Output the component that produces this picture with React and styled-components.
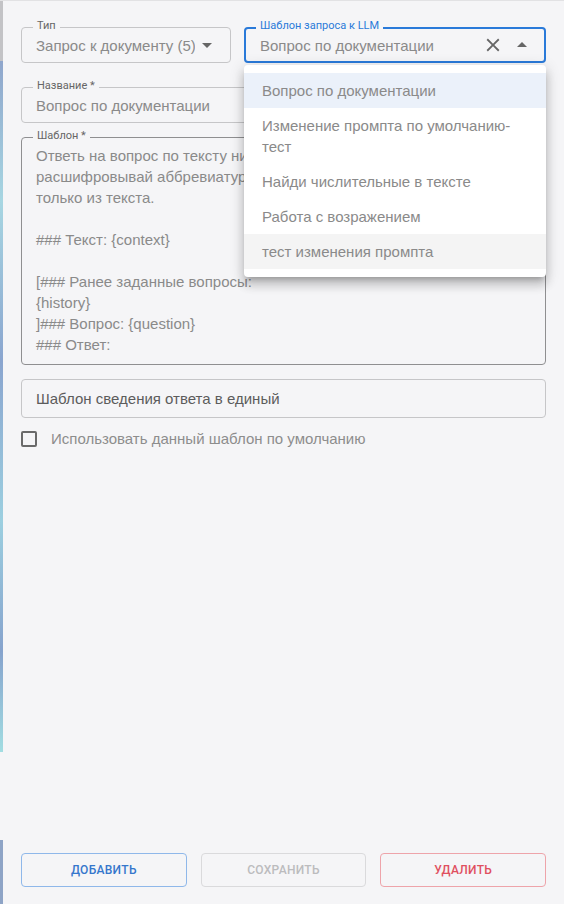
import React from "react";
import styled, { createGlobalStyle } from "styled-components";

const PAGE_BG = "#f5f5f7";

const GlobalStyle = createGlobalStyle`
  html, body {
    margin: 0;
    padding: 0;
    background: ${PAGE_BG};
  }
  * {
    box-sizing: border-box;
  }
`;

const Page = styled.div`
  display: flex;
  height: 904px;
  border-top: 1px solid #e2e2e4;
  background: ${PAGE_BG};
  font-family: "Liberation Sans", Arial, sans-serif;
`;

const Strip = styled.div`
  width: 3px;
  flex-shrink: 0;
  background:
    linear-gradient(to bottom,
      #c3c3c6 0, #c3c3c6 60px,
      #8fa6cc 60px, #a7d6e2 200px, #8aa5cf 360px, #9ccfe0 520px, #86a3cd 650px, #a2dde2 751px,
      transparent 751px, transparent 839px,
      #8ea4c6 839px, #8ea4c6 100%);
`;

const Panel = styled.div`
  flex: 1;
  display: flex;
  flex-direction: column;
  padding: 26px 18px 17px 18px;
`;

const Form = styled.div`
  display: flex;
  flex-direction: column;
  gap: 14px;
`;

const TopRow = styled.div`
  display: grid;
  grid-template-columns: 210px 1fr;
  gap: 13px;
  margin-bottom: 10px;
`;

const FieldBox = styled.div`
  position: relative;
  display: flex;
  align-items: center;
  height: ${p => p.$height || 36}px;
  padding: 0 ${p => (p.$focused ? 10 : 11)}px 0 14px;
  border: ${p => (p.$focused ? "2px solid #2a7ad9" : `1px solid ${p.$border || "#c6c6c8"}`)};
  border-radius: 4px;
  font-size: 15px;
  color: ${p => p.$color || "#8a8a8a"};
`;

const FieldLabel = styled.span`
  position: absolute;
  top: ${p => (p.$focused ? -10 : -9)}px;
  left: ${p => (p.$focused ? 10 : 11)}px;
  padding: 0 4px;
  background: ${PAGE_BG};
  font-family: Roboto, "Liberation Sans", sans-serif;
  font-size: 11px;
  line-height: 13px;
  color: ${p => (p.$focused ? "#2a7ad9" : "#666")};
`;

const Value = styled.span`
  flex: 1;
  white-space: nowrap;
  overflow: hidden;
`;

const IconSlot = styled.span`
  display: flex;
  align-items: center;
  justify-content: center;
  width: ${p => p.$size}px;
  height: ${p => p.$size}px;
  margin-left: ${p => p.$gap || 0}px;
  color: #666;
`;

const TemplateBox = styled.div`
  position: relative;
  height: 228px;
  padding: 7px 14px;
  border: 1px solid #8f8f91;
  border-radius: 4px;
  font-size: 15px;
  line-height: 21px;
  color: #8a8a8a;
  white-space: pre-wrap;
`;

const Menu = styled.ul`
  position: absolute;
  top: calc(100% + 4px);
  left: -2px;
  right: -2px;
  z-index: 10;
  margin: 0;
  padding: 8px 0;
  list-style: none;
  background: #fff;
  border-radius: 4px;
  box-shadow: 0 5px 5px -3px rgba(0, 0, 0, 0.2), 0 8px 10px 1px rgba(0, 0, 0, 0.14),
    0 3px 14px 2px rgba(0, 0, 0, 0.12);
`;

const MenuItem = styled.li`
  padding: 7px 16px 7px 18px;
  font-size: 15px;
  line-height: 21px;
  color: #8a8a8a;
  background: ${p => (p.$selected ? "#ebf1fa" : p.$hover ? "#f4f4f4" : "transparent")};
`;

const CheckRow = styled.label`
  display: flex;
  align-items: center;
  margin-top: -2px;
`;

const CheckBox = styled.span`
  width: 16px;
  height: 16px;
  border: 2px solid #6a6a6a;
  border-radius: 2px;
`;

const CheckText = styled.span`
  margin-left: 14px;
  font-size: 15px;
  color: #8d8d8d;
`;

const Actions = styled.div`
  margin-top: auto;
  display: grid;
  grid-template-columns: repeat(3, 1fr);
  gap: 14px;
`;

const Button = styled.button`
  height: 34px;
  background: transparent;
  border: 1px solid ${p => p.$border};
  border-radius: 4px;
  color: ${p => p.$color};
  font-family: Roboto, "Liberation Sans", sans-serif;
  font-size: 12px;
  font-weight: 500;
  letter-spacing: 0.3px;
  text-transform: uppercase;
`;

const ArrowIcon = ({ up }) => (
  <svg width="24" height="24" viewBox="0 0 24 24" fill="currentColor">
    <path d={up ? "M7 14l5-5 5 5z" : "M7 10l5 5 5-5z"} />
  </svg>
);

const CloseIcon = () => (
  <svg width="22" height="22" viewBox="0 0 24 24" fill="currentColor">
    <path d="M19 6.41 17.59 5 12 10.59 6.41 5 5 6.41 10.59 12 5 17.59 6.41 19 12 13.41 17.59 19 19 17.59 13.41 12z" />
  </svg>
);

const templates = [
  "Вопрос по документации",
  "Изменение промпта по умолчанию-тест",
  "Найди числительные в тексте",
  "Работа с возражением",
  "тест изменения промпта",
];

const templateText =
  "Ответь на вопрос по тексту ниже. Отвечай кратко, не\n" +
  "расшифровывай аббревиатуры, используй информацию\n" +
  "только из текста.\n\n" +
  "### Текст: {context}\n\n" +
  "[### Ранее заданные вопросы:\n" +
  "{history}\n" +
  "]### Вопрос: {question}\n" +
  "### Ответ:";

export default function App() {
  return (
    <>
      <GlobalStyle />
      <Page>
        <Strip />
        <Panel>
          <Form>
            <TopRow>
              <FieldBox>
                <FieldLabel>Тип</FieldLabel>
                <Value>Запрос к документу (5)</Value>
                <IconSlot $size={24}>
                  <ArrowIcon />
                </IconSlot>
              </FieldBox>
              <FieldBox $focused>
                <FieldLabel $focused>Шаблон запроса к LLM</FieldLabel>
                <Value>Вопрос по документации</Value>
                <IconSlot $size={22}>
                  <CloseIcon />
                </IconSlot>
                <IconSlot $size={24} $gap={6}>
                  <ArrowIcon up />
                </IconSlot>
                <Menu>
                  {templates.map((t, i) => (
                    <MenuItem key={t} $selected={i === 0} $hover={i === templates.length - 1}>
                      {t}
                    </MenuItem>
                  ))}
                </Menu>
              </FieldBox>
            </TopRow>

            <FieldBox>
              <FieldLabel>Название *</FieldLabel>
              <Value>Вопрос по документации</Value>
            </FieldBox>

            <TemplateBox>
              <FieldLabel>Шаблон *</FieldLabel>
              {templateText}
            </TemplateBox>

            <FieldBox $height={39} $color="#5c5c5c">
              <Value>Шаблон сведения ответа в единый</Value>
            </FieldBox>

            <CheckRow>
              <CheckBox />
              <CheckText>Использовать данный шаблон по умолчанию</CheckText>
            </CheckRow>
          </Form>

          <Actions>
            <Button $border="#8fb8ea" $color="#3577cc">Добавить</Button>
            <Button $border="#dadadc" $color="#bcbcbe" disabled>Сохранить</Button>
            <Button $border="#eea4aa" $color="#e0505f">Удалить</Button>
          </Actions>
        </Panel>
      </Page>
    </>
  );
}
